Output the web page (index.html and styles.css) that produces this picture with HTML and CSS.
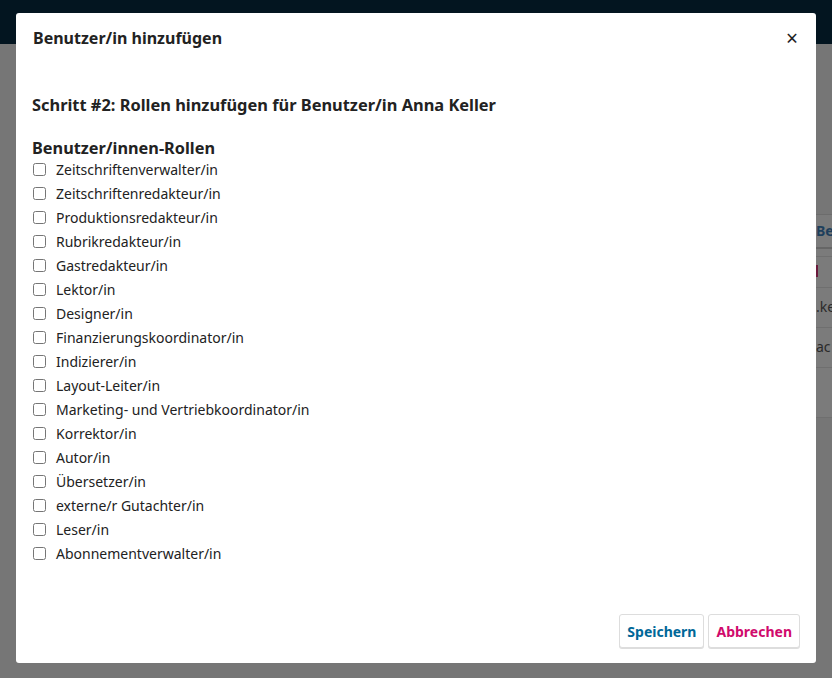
FILE: index.html
```html
<!DOCTYPE html>
<html lang="de">
<head>
  <meta charset="UTF-8">
  <title>Benutzer/in hinzufügen</title>
  <link rel="stylesheet" href="styles.css">
</head>
<body>
  <header class="topbar"></header>
  <main class="page">
    <div class="table-stub">
      <div class="stub-row stub-head">Be</div>
      <div class="stub-row stub-thin"></div>
      <div class="stub-row stub-flag"><span class="flag"></span></div>
      <div class="stub-row">.ke</div>
      <div class="stub-row">ac</div>
      <div class="stub-row stub-empty"></div>
    </div>
  </main>

  <div class="modal">
    <div class="modal-header">
      <h1>Benutzer/in hinzufügen</h1>
      <button class="close" type="button">×</button>
    </div>
    <div class="modal-body">
      <h2>Schritt #2: Rollen hinzufügen für Benutzer/in Anna Keller</h2>
      <h3>Benutzer/innen-Rollen</h3>
      <ul class="roles">
        <li><label><input type="checkbox"> Zeitschriftenverwalter/in</label></li>
        <li><label><input type="checkbox"> Zeitschriftenredakteur/in</label></li>
        <li><label><input type="checkbox"> Produktionsredakteur/in</label></li>
        <li><label><input type="checkbox"> Rubrikredakteur/in</label></li>
        <li><label><input type="checkbox"> Gastredakteur/in</label></li>
        <li><label><input type="checkbox"> Lektor/in</label></li>
        <li><label><input type="checkbox"> Designer/in</label></li>
        <li><label><input type="checkbox"> Finanzierungskoordinator/in</label></li>
        <li><label><input type="checkbox"> Indizierer/in</label></li>
        <li><label><input type="checkbox"> Layout-Leiter/in</label></li>
        <li><label><input type="checkbox"> Marketing- und Vertriebkoordinator/in</label></li>
        <li><label><input type="checkbox"> Korrektor/in</label></li>
        <li><label><input type="checkbox"> Autor/in</label></li>
        <li><label><input type="checkbox"> Übersetzer/in</label></li>
        <li><label><input type="checkbox"> externe/r Gutachter/in</label></li>
        <li><label><input type="checkbox"> Leser/in</label></li>
        <li><label><input type="checkbox"> Abonnementverwalter/in</label></li>
      </ul>
    </div>
    <div class="modal-footer">
      <button class="btn btn-save" type="button">Speichern</button>
      <button class="btn btn-cancel" type="button">Abbrechen</button>
    </div>
  </div>
</body>
</html>
```

FILE: styles.css
```css
* {
  margin: 0;
  padding: 0;
  box-sizing: border-box;
}

body {
  font-family: 'Noto Sans', sans-serif;
  background-color: #767676;
  color: #222;
  height: 678px;
  overflow: hidden;
}

/* page behind the overlay */
.topbar {
  height: 44px;
  background-color: #031520;
}

.page {
  display: flex;
  justify-content: flex-end;
  padding-top: 170px;
}

.table-stub {
  width: 16px;
  background-color: #7b7b7b;
  border-top: 1px solid #6c6c6c;
  font-size: 14px;
  color: #2a2a2a;
}

.stub-row {
  height: 40px;
  line-height: 38px;
  border-bottom: 1px solid #6f6f6f;
  white-space: nowrap;
  overflow: hidden;
}

.stub-head {
  height: 34px;
  line-height: 32px;
  font-weight: 700;
  color: #1e3f5c;
  border-bottom: 2px solid #666;
}

.stub-thin {
  height: 8px;
}

.stub-flag {
  position: relative;
  height: 31px;
}

.flag {
  position: absolute;
  left: 0;
  top: 8px;
  width: 2px;
  height: 12px;
  background-color: #6b1a3c;
}

.stub-empty {
  height: 50px;
}

/* modal */
.modal {
  position: absolute;
  left: 16px;
  top: 13px;
  width: 800px;
  height: 650px;
  background-color: #fff;
  border-radius: 3px;
  display: flex;
  flex-direction: column;
}

.modal-header {
  display: flex;
  justify-content: space-between;
  align-items: center;
  height: 49px;
  padding: 0 18px 0 17px;
}

.modal-header h1 {
  font-size: 16px;
  font-weight: 700;
  color: #222;
}

.close {
  border: none;
  background: none;
  font-family: 'Noto Sans', sans-serif;
  font-size: 21px;
  line-height: 1;
  margin-top: 2px;
  color: #222;
  cursor: pointer;
}

.modal-body {
  flex: 1;
  padding: 31px 16px 0 16px;
}

.modal-body h2 {
  font-size: 16.4px;
  font-weight: 700;
  margin-bottom: 20px;
}

.modal-body h3 {
  font-size: 16.3px;
  font-weight: 700;
  line-height: 24px;
}

.roles {
  list-style-type: none;
}

.roles li {
  height: 24px;
  font-size: 14px;
}

.roles label {
  display: flex;
  align-items: center;
  gap: 10px;
}

.roles input {
  width: 13px;
  height: 13px;
  margin: 0 0 0 1px;
}

.modal-footer {
  display: flex;
  justify-content: flex-end;
  gap: 4px;
  padding: 0 16px 15px 0;
}

.btn {
  height: 34px;
  padding: 0 7px;
  font-family: 'Noto Sans', sans-serif;
  font-size: 14px;
  font-weight: 700;
  background-color: #fff;
  border: 1px solid #ddd;
  border-radius: 3px;
  box-shadow: 0 1px 0 #ddd;
  cursor: pointer;
}

.btn-save {
  color: #006798;
}

.btn-cancel {
  color: #d00a6c;
}
```
